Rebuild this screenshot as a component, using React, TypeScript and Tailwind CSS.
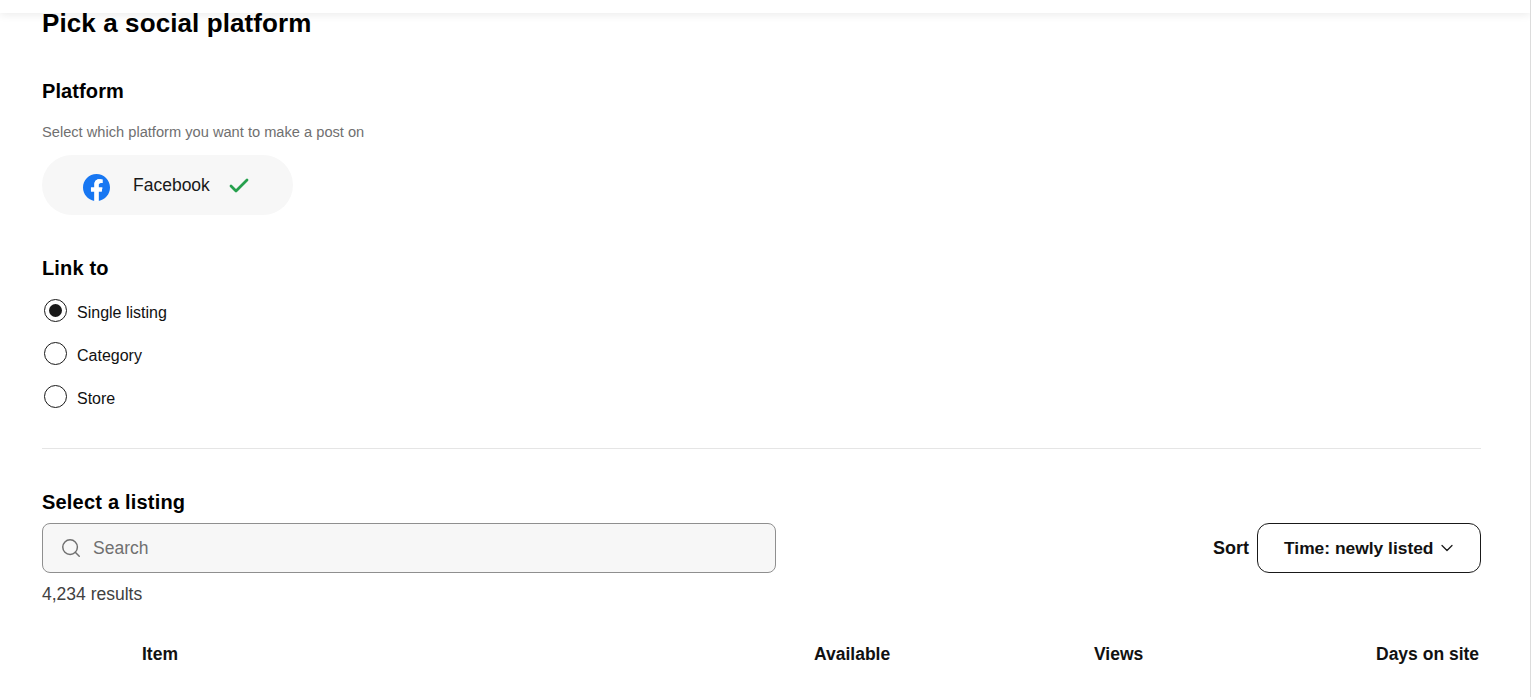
import React from "react";
import { Check, ChevronDown, Search } from "lucide-react";

const FONT = "font-['Liberation_Sans',Arial,sans-serif]";

const Radio = (props: { label: string; checked?: boolean }) => (
  <label className="flex items-center h-[23px]">
    <span className="ml-[2px] -mt-[2px] w-[23px] h-[23px] rounded-full border-[1.5px] border-[#191919] flex items-center justify-center bg-white">
      {props.checked && <span className="w-[13px] h-[13px] rounded-full bg-[#191919]"></span>}
    </span>
    <span className="ml-[10px] mt-[3px] text-base leading-[20px] text-[#111]">{props.label}</span>
  </label>
);

const App = () => (
  <div className={`${FONT} h-[697px] w-full overflow-hidden bg-white text-black border-r border-[#dcdcdc]`}>
    <div className="h-[13px] bg-white shadow-[0_2px_8px_rgba(0,0,0,0.08)] relative z-10"></div>
    <main className="pl-[42px] pr-[49px]">
      <h1 className="text-[26px] leading-[20px] font-bold tracking-[0.1px]">Pick a social platform</h1>

      <h2 className="mt-[45px] text-xl leading-[26px] font-bold tracking-[0.1px]">Platform</h2>
      <p className="mt-[18px] text-[14.65px] leading-[20px] text-[#707070]">Select which platform you want to make a post on</p>
      <div className="mt-[13px] w-[251px] h-[60px] rounded-[30px] bg-[#f7f7f7] flex items-center pl-[41px]">
        <svg className="w-[27px] h-[27px] mt-[4px]" viewBox="0 0 24 24">
          <path fill="#1877f2" d="M24 12.07C24 5.4 18.63 0 12 0S0 5.4 0 12.07c0 6.03 4.39 11.02 10.13 11.93v-8.44H7.08v-3.49h3.05V9.41c0-3.02 1.79-4.69 4.53-4.69 1.31 0 2.69.24 2.69.24v2.97h-1.52c-1.49 0-1.96.93-1.96 1.89v2.25h3.33l-.53 3.49h-2.8V24C19.61 23.09 24 18.1 24 12.07z" />
          <path fill="#fff" d="M16.67 15.56l.53-3.49h-3.33V9.82c0-.96.47-1.89 1.96-1.89h1.52V4.96s-1.38-.24-2.69-.24c-2.74 0-4.53 1.67-4.53 4.69v2.66H7.08v3.49h3.05V24a12 12 0 0 0 3.74 0v-8.44h2.8z" />
        </svg>
        <span className="ml-[23px] text-[17.5px] leading-[24px] text-[#191919]">Facebook</span>
        <Check className="ml-[17px] mt-[2px] w-[24px] h-[24px] text-[#26a04d]" strokeWidth={2.8} />
      </div>

      <h2 className="mt-[40px] text-xl leading-[26px] font-bold tracking-[0.15px]">Link to</h2>
      <div className="mt-[19px] flex flex-col gap-[20px]">
        <Radio label="Single listing" checked />
        <Radio label="Category" />
        <Radio label="Store" />
      </div>

      <hr className="mt-[39px] border-t border-[#e5e5e5]" />

      <h2 className="mt-[40px] text-xl leading-[26px] font-bold tracking-[0.2px]">Select a listing</h2>
      <div className="mt-[8px] flex items-center justify-between">
        <div className="w-[734px] h-[50px] rounded-lg border border-[#8f8f8f] bg-[#f7f7f7] flex items-center pl-[17px]">
          <Search className="w-[22px] h-[22px] text-[#707070]" strokeWidth={1.6} />
          <span className="ml-[11px] text-[17.5px] text-[#707070]">Search</span>
        </div>
        <div className="flex items-center">
          <span className="font-bold text-[#111] text-[18px]">Sort</span>
          <button className="ml-[8px] w-[224px] h-[50px] rounded-[12px] border border-[#191919] flex items-center pl-[26px]">
            <span className="text-[17.4px] font-bold text-[#111]">Time: newly listed</span>
            <ChevronDown className="ml-[4px] w-[20px] h-[20px] text-[#191919]" strokeWidth={1.5} />
          </button>
        </div>
      </div>
      <p className="mt-[10px] text-[17.5px] leading-[22px] text-[#414141]">4,234 results</p>

      <div className="mt-[37px] flex items-center text-[17.5px] leading-[24px] font-bold text-[#111] whitespace-nowrap">
        <span className="ml-[100px] w-[672px]">Item</span>
        <span className="w-[280px]">Available</span>
        <span className="w-[282px]">Views</span>
        <span>Days on site</span>
      </div>
    </main>
  </div>
);

export default App;
